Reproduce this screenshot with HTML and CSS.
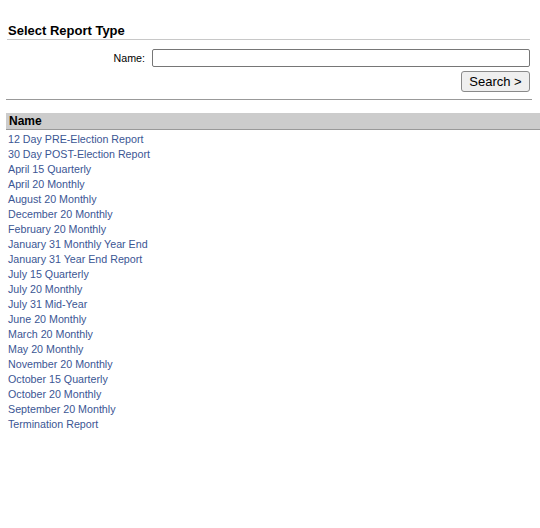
FILE: index.html
```html
<!DOCTYPE html>
<html lang="en">
<head>
    <meta charset="UTF-8">
    <title>Select Report Type</title>
    <link rel="stylesheet" href="styles.css">
</head>
<body>
    <div class="page">
      <h2 class="section-title">Select Report Type</h2>

      <form class="search-form">
        <div class="form-row">
          <label for="name">Name:</label>
          <input type="text" id="name" name="name">
        </div>
        <div class="button-row">
          <button type="submit">Search &gt;</button>
        </div>
      </form>

      <hr class="divider">

      <div class="results">
        <div class="results-head">Name</div>
        <ul class="results-list">
          <li><a href="#">12 Day PRE-Election Report</a></li>
          <li><a href="#">30 Day POST-Election Report</a></li>
          <li><a href="#">April 15 Quarterly</a></li>
          <li><a href="#">April 20 Monthly</a></li>
          <li><a href="#">August 20 Monthly</a></li>
          <li><a href="#">December 20 Monthly</a></li>
          <li><a href="#">February 20 Monthly</a></li>
          <li><a href="#">January 31 Monthly Year End</a></li>
          <li><a href="#">January 31 Year End Report</a></li>
          <li><a href="#">July 15 Quarterly</a></li>
          <li><a href="#">July 20 Monthly</a></li>
          <li><a href="#">July 31 Mid-Year</a></li>
          <li><a href="#">June 20 Monthly</a></li>
          <li><a href="#">March 20 Monthly</a></li>
          <li><a href="#">May 20 Monthly</a></li>
          <li><a href="#">November 20 Monthly</a></li>
          <li><a href="#">October 15 Quarterly</a></li>
          <li><a href="#">October 20 Monthly</a></li>
          <li><a href="#">September 20 Monthly</a></li>
          <li><a href="#">Termination Report</a></li>
        </ul>
      </div>
    </div>
</body>
</html>
```

FILE: styles.css
```css
*{
  padding: 0;
  margin: 0;
  box-sizing: border-box;
}

body {
  font-family: "Liberation Sans", Arial, sans-serif;
  color: #000;
  background: #fff;
}

/*outer wrapper*/
.page {
  padding-top: 23px;
}

/*heading with rule under it*/
.section-title {
  margin: 0 10px 0 7px;
  padding-left: 1px;
  font-size: 13px;
  line-height: 16px;
  font-weight: bold;
  border-bottom: 1px solid #c8c8c8;
}

.search-form {
  margin: 9px 10px 0 0;
}

.form-row {
  display: flex;
  align-items: center;
  justify-content: flex-end;
  gap: 7px;
}

.form-row label {
  font-size: 10.7px;
}

.form-row input {
  width: 378px;
  height: 18px;
  border: 1px solid #767676;
  border-radius: 2px;
  font-size: 11px;
  padding: 0 3px;
}

.button-row {
  display: flex;
  justify-content: flex-end;
  margin-top: 4px;
}

button {
  height: 21px;
  width: 69px;
  padding: 0;
  font-family: "Liberation Sans", Arial, sans-serif;
  font-size: 13px;
  color: #000;
  background: #efefef;
  border: 1px solid #8a8a8a;
  border-radius: 3px;
}

.divider {
  margin: 7px 8px 0 6px;
  border: none;
  border-top: 1px solid #999;
}

/*results table*/
.results {
  margin: 13px 0 0 6px;
}

.results-head {
  background-color: #cccccc;
  border-bottom: 1px solid #999;
  height: 17px;
  padding-left: 3px;
  font-size: 12px;
  font-weight: bold;
  line-height: 16px;
}

.results-list {
  list-style: none;
  margin-top: 2px;
}

.results-list li {
  height: 15px;
  line-height: 15px;
  padding-left: 2px;
  font-size: 10.7px;
}

.results-list a {
  color: #3b5694;
  text-decoration: none;
}
```
